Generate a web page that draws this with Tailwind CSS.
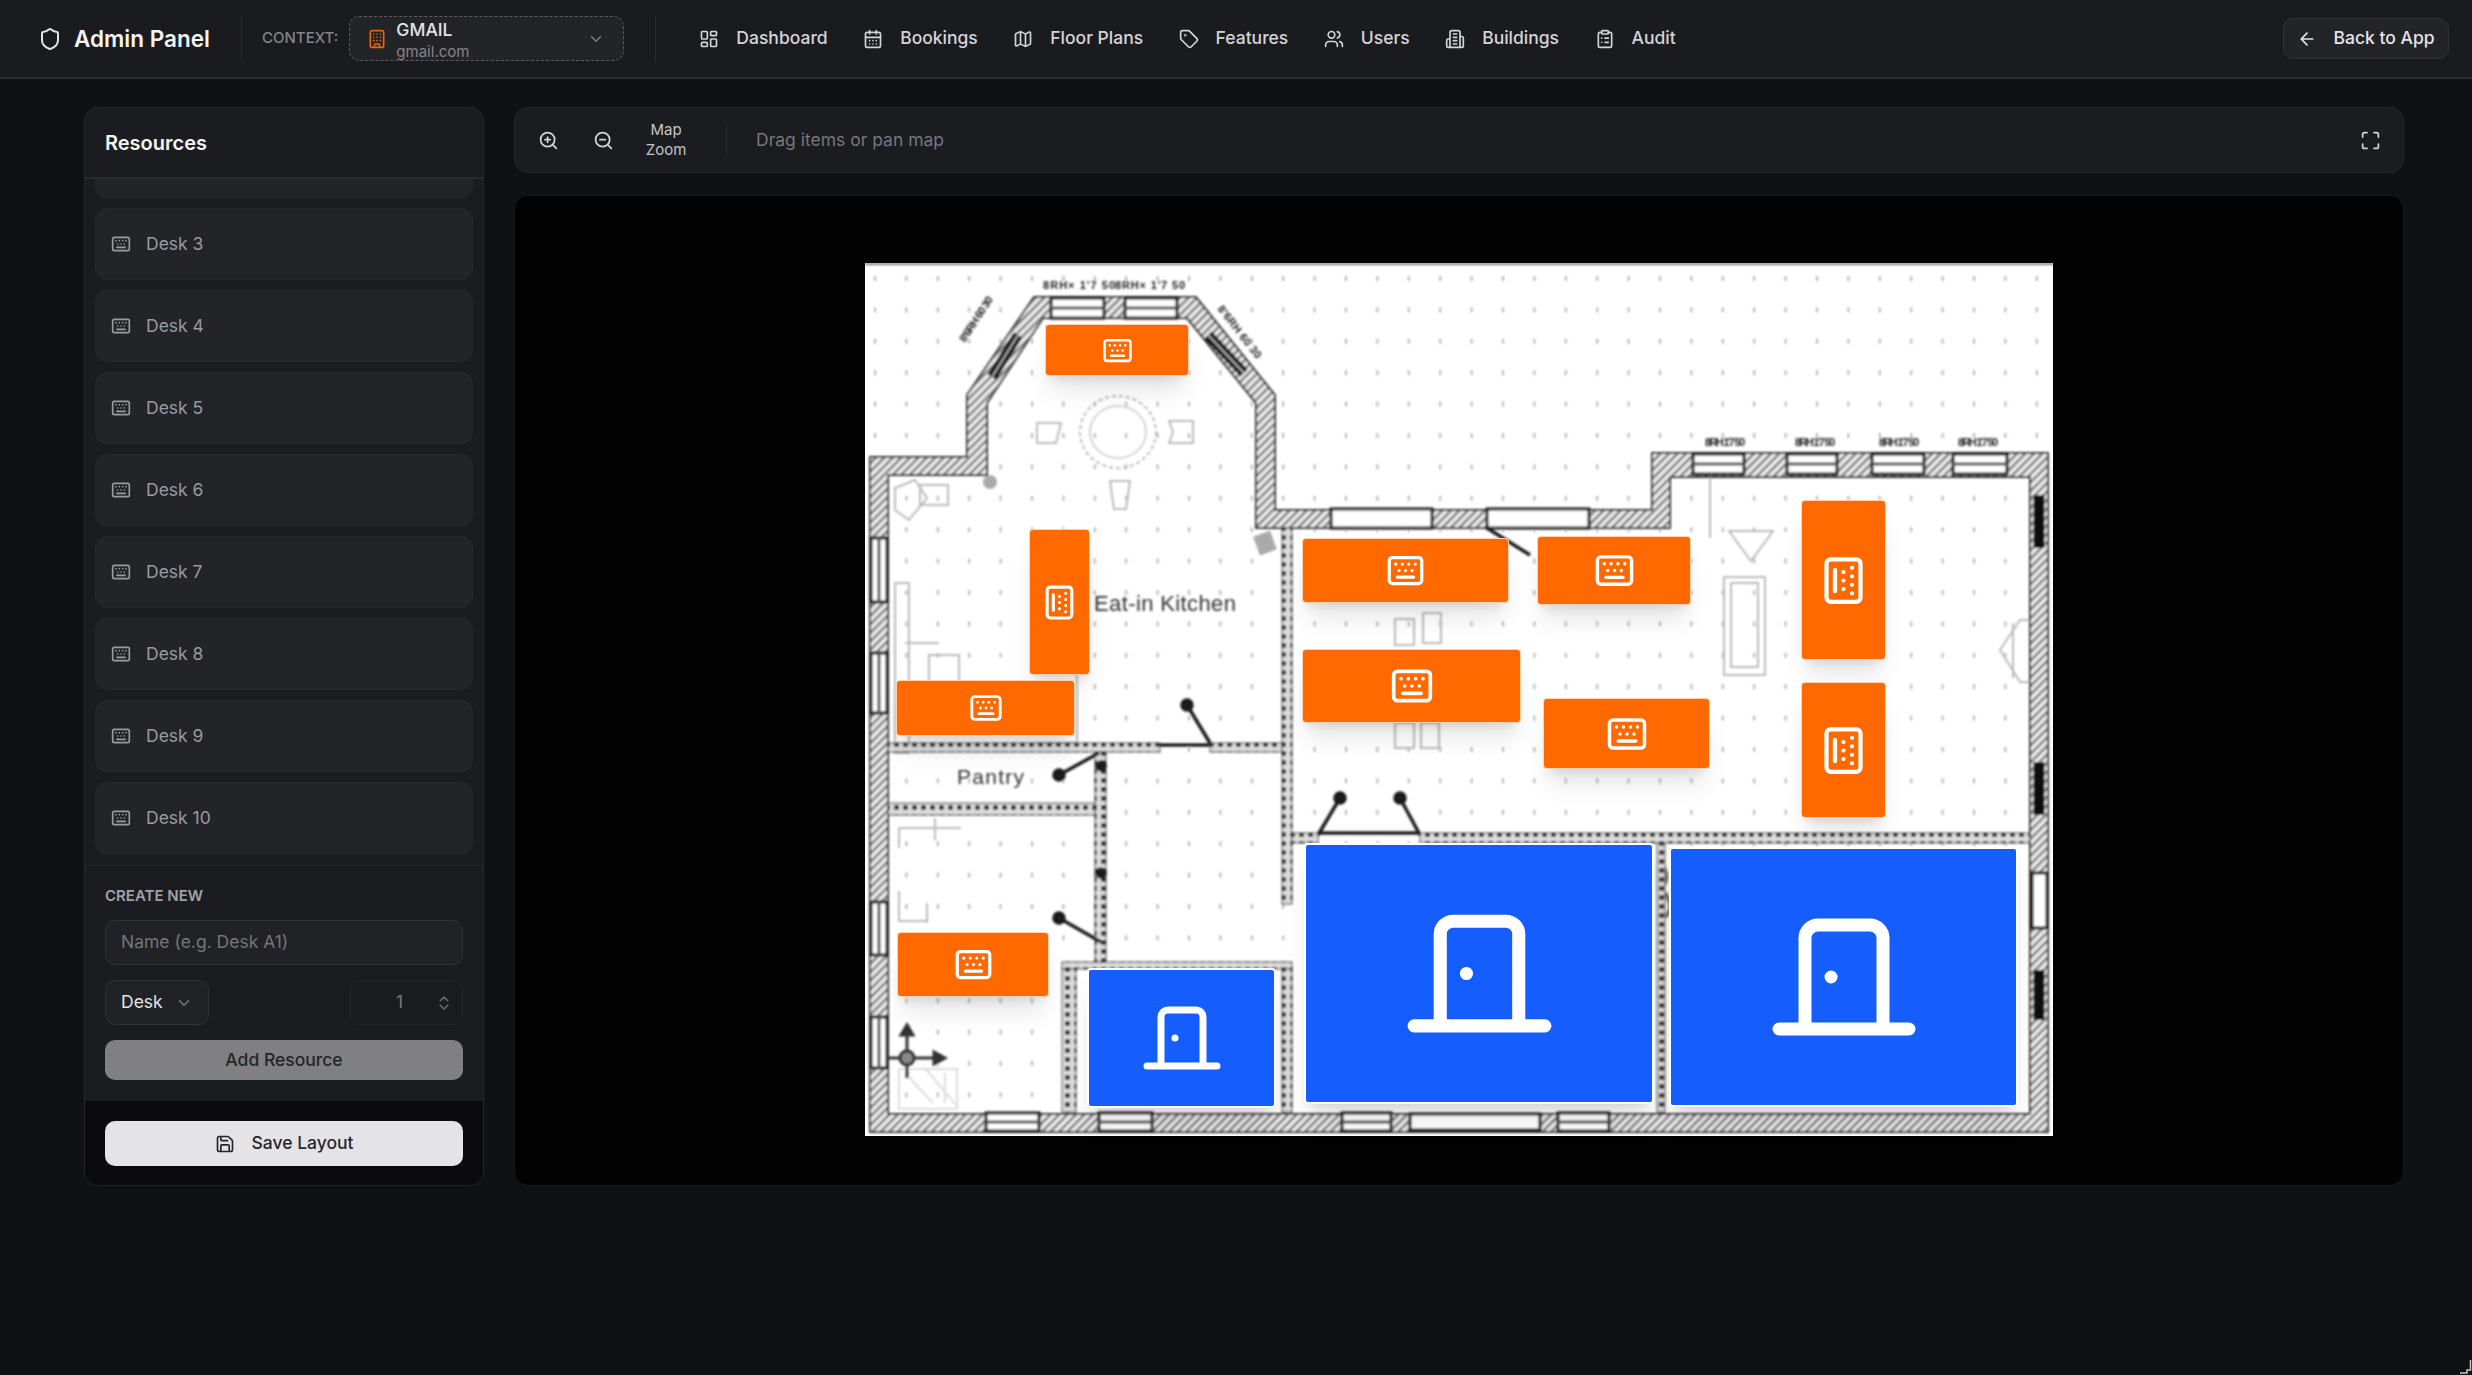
<!DOCTYPE html>
<html lang="en">
<head>
<meta charset="UTF-8">
<title>Admin Panel - Floor Plans</title>
<script src="https://cdn.jsdelivr.net/npm/@tailwindcss/browser@4"></script>
</head>
<body class="h-screen overflow-hidden bg-[#101114] text-[#e4e4e7] font-['Inter',sans-serif] relative">

<!-- icon sprite (lucide shapes) -->
<svg class="hidden">
  <symbol id="i-kbd" viewBox="0 0 24 24"><path d="M10 8h.01M12 12h.01M14 8h.01M16 12h.01M18 8h.01M6 8h.01M7 16h10M8 12h.01"/><rect width="20" height="16" x="2" y="4" rx="2"/></symbol>
  <symbol id="i-kbd-v" viewBox="0 0 24 24"><g transform="rotate(90 12 12)"><path d="M10 8h.01M12 12h.01M14 8h.01M16 12h.01M18 8h.01M6 8h.01M7 16h10M8 12h.01"/><rect width="20" height="16" x="2" y="4" rx="2"/></g></symbol>
  <symbol id="i-door" viewBox="0 0 24 24"><path d="M10 12h.01M18 20V6a2 2 0 0 0-2-2H8a2 2 0 0 0-2 2v14M2 20h20"/></symbol>
  <symbol id="i-chev" viewBox="0 0 24 24"><path d="m6 9 6 6 6-6"/></symbol>
</svg>

<!-- top bar -->
<header class="h-[79px] flex items-center bg-[#1a1b1e] border-b-2 border-[#2a2b2e] pl-[38px] pr-[23px]">
  <div class="flex items-center gap-[12px]">
    <svg class="w-[24px] h-[24px] text-[#e4e4e7]" viewBox="0 0 24 24" fill="none" stroke="currentColor" stroke-width="2" stroke-linecap="round" stroke-linejoin="round"><path d="M20 13c0 5-3.5 7.5-7.66 8.95a1 1 0 0 1-.67-.01C7.5 20.5 4 18 4 13V6a1 1 0 0 1 1-1c2 0 4.5-1.2 6.24-2.72a1.17 1.17 0 0 1 1.52 0C14.51 3.81 17 5 19 5a1 1 0 0 1 1 1z"/></svg>
    <span class="w-[137px] text-[22.5px] font-semibold whitespace-nowrap text-[#f4f4f5]">Admin Panel</span>
  </div>
  <div class="w-px h-[45px] bg-[#2a2b2e] ml-[30px]"></div>
  <span class="ml-[20px] text-[15px] font-medium text-[#85858b]">CONTEXT:</span>
  <div class="ml-[11px] w-[275px] h-[45px] overflow-hidden rounded-[10px] border border-dashed border-[#5a5b60] bg-[#232427] flex items-center pl-[17px] pr-[18px]">
    <svg class="w-[20px] h-[22px] text-[#e8650f] shrink-0" viewBox="0 0 24 24" fill="none" stroke="currentColor" stroke-width="2" stroke-linecap="round" stroke-linejoin="round"><path d="M12 10h.01M12 14h.01M12 6h.01M16 10h.01M16 14h.01M16 6h.01M8 10h.01M8 14h.01M8 6h.01M9 22v-3a1 1 0 0 1 1-1h4a1 1 0 0 1 1 1v3"/><rect x="4" y="2" width="16" height="20" rx="2"/></svg>
    <div class="ml-[9px] flex-1 pt-[3px]">
      <div class="text-[17.5px] font-medium leading-[24px] text-[#e4e4e7]">GMAIL</div>
      <div class="text-[15px] leading-[20px] text-[#85858b]">gmail.com</div>
    </div>
    <svg class="w-[18px] h-[18px] text-[#7a7a80]" fill="none" stroke="currentColor" stroke-width="2" stroke-linecap="round" stroke-linejoin="round"><use href="#i-chev"/></svg>
  </div>
  <div class="w-px h-[45px] bg-[#2a2b2e] ml-[31px]"></div>

  <nav class="ml-[43px] flex items-center gap-[35.5px] text-[17.5px] font-medium text-[#d4d4d8]">
    <a class="flex items-center gap-[17px]"><svg class="w-[20px] h-[20px]" viewBox="0 0 24 24" fill="none" stroke="currentColor" stroke-width="2" stroke-linecap="round" stroke-linejoin="round"><rect width="7" height="9" x="3" y="3" rx="1"/><rect width="7" height="5" x="14" y="3" rx="1"/><rect width="7" height="9" x="14" y="12" rx="1"/><rect width="7" height="5" x="3" y="16" rx="1"/></svg>Dashboard</a>
    <a class="flex items-center gap-[17px]"><svg class="w-[20px] h-[20px]" viewBox="0 0 24 24" fill="none" stroke="currentColor" stroke-width="2" stroke-linecap="round" stroke-linejoin="round"><path d="M8 2v4M16 2v4"/><rect width="18" height="18" x="3" y="4" rx="2"/><path d="M3 10h18M8 14h.01M12 14h.01M16 14h.01M8 18h.01M12 18h.01M16 18h.01"/></svg>Bookings</a>
    <a class="flex items-center gap-[17px]"><svg class="w-[20px] h-[20px]" viewBox="0 0 24 24" fill="none" stroke="currentColor" stroke-width="2" stroke-linecap="round" stroke-linejoin="round"><path d="M14.106 5.553a2 2 0 0 0 1.788 0l3.659-1.83A1 1 0 0 1 21 4.619v12.764a1 1 0 0 1-.553.894l-4.553 2.277a2 2 0 0 1-1.788 0l-4.212-2.106a2 2 0 0 0-1.788 0l-3.659 1.83A1 1 0 0 1 3 19.381V6.618a1 1 0 0 1 .553-.894l4.553-2.277a2 2 0 0 1 1.788 0zM15 5.764v15M9 3.236v15"/></svg>Floor Plans</a>
    <a class="flex items-center gap-[17px]"><svg class="w-[20px] h-[20px]" viewBox="0 0 24 24" fill="none" stroke="currentColor" stroke-width="2" stroke-linecap="round" stroke-linejoin="round"><path d="M12.586 2.586A2 2 0 0 0 11.172 2H4a2 2 0 0 0-2 2v7.172a2 2 0 0 0 .586 1.414l8.704 8.704a2.426 2.426 0 0 0 3.42 0l6.58-6.58a2.426 2.426 0 0 0 0-3.42z"/><circle cx="7.5" cy="7.5" r=".5"/></svg>Features</a>
    <a class="flex items-center gap-[17px]"><svg class="w-[20px] h-[20px]" viewBox="0 0 24 24" fill="none" stroke="currentColor" stroke-width="2" stroke-linecap="round" stroke-linejoin="round"><path d="M16 21v-2a4 4 0 0 0-4-4H6a4 4 0 0 0-4 4v2M16 3.128a4 4 0 0 1 0 7.744M22 21v-2a4 4 0 0 0-3-3.87"/><circle cx="9" cy="7" r="4"/></svg>Users</a>
    <a class="flex items-center gap-[17px]"><svg class="w-[20px] h-[20px]" viewBox="0 0 24 24" fill="none" stroke="currentColor" stroke-width="2" stroke-linecap="round" stroke-linejoin="round"><path d="M6 22V4a2 2 0 0 1 2-2h8a2 2 0 0 1 2 2v18ZM6 12H4a2 2 0 0 0-2 2v6a2 2 0 0 0 2 2h2M18 9h2a2 2 0 0 1 2 2v9a2 2 0 0 1-2 2h-2M10 6h4M10 10h4M10 14h4M10 18h4"/></svg>Buildings</a>
    <a class="flex items-center gap-[17px]"><svg class="w-[20px] h-[20px]" viewBox="0 0 24 24" fill="none" stroke="currentColor" stroke-width="2" stroke-linecap="round" stroke-linejoin="round"><rect width="8" height="4" x="8" y="2" rx="1"/><path d="M16 4h2a2 2 0 0 1 2 2v14a2 2 0 0 1-2 2H6a2 2 0 0 1-2-2V6a2 2 0 0 1 2-2h2M12 11h4M12 16h4M8 11h.01M8 16h.01"/></svg>Audit</a>
  </nav>

  <button class="ml-auto h-[41px] w-[166px] flex items-center justify-center gap-[16px] rounded-[10px] border border-[#303135] bg-[#232427] text-[17.5px] font-medium text-[#e4e4e7]">
    <svg class="w-[20px] h-[20px]" viewBox="0 0 24 24" fill="none" stroke="currentColor" stroke-width="2" stroke-linecap="round" stroke-linejoin="round"><path d="m12 19-7-7 7-7M19 12H5"/></svg>
    Back to App
  </button>
</header>

<main class="flex gap-[30px] pl-[84px] pr-[67px] pt-[28px]">

  <!-- resources sidebar -->
  <aside class="w-[400px] h-[1079px] shrink-0 flex flex-col overflow-hidden rounded-[14px] border border-[#26272a] bg-[#1b1c1f]">
    <div class="h-[71px] shrink-0 flex items-center px-[20px] border-b-2 border-[#2a2b2e] text-[20px] font-semibold text-[#f4f4f5]">Resources</div>
    <div class="h-[686px] shrink-0 overflow-hidden px-[10px]">
      <div class="flex flex-col gap-[10px] mt-[-53px] text-[17.5px] text-[#9a9aa0]">
        <div class="h-[72px] shrink-0 rounded-[12px] border border-[#27282b] bg-[#232427]"></div>
        <div class="h-[72px] shrink-0 flex items-center gap-[15px] pl-[15px] rounded-[12px] border border-[#27282b] bg-[#232427]"><svg class="w-[20px] h-[20px]" fill="none" stroke="currentColor" stroke-width="2" stroke-linecap="round" stroke-linejoin="round"><use href="#i-kbd"/></svg>Desk 3</div>
        <div class="h-[72px] shrink-0 flex items-center gap-[15px] pl-[15px] rounded-[12px] border border-[#27282b] bg-[#232427]"><svg class="w-[20px] h-[20px]" fill="none" stroke="currentColor" stroke-width="2" stroke-linecap="round" stroke-linejoin="round"><use href="#i-kbd"/></svg>Desk 4</div>
        <div class="h-[72px] shrink-0 flex items-center gap-[15px] pl-[15px] rounded-[12px] border border-[#27282b] bg-[#232427]"><svg class="w-[20px] h-[20px]" fill="none" stroke="currentColor" stroke-width="2" stroke-linecap="round" stroke-linejoin="round"><use href="#i-kbd"/></svg>Desk 5</div>
        <div class="h-[72px] shrink-0 flex items-center gap-[15px] pl-[15px] rounded-[12px] border border-[#27282b] bg-[#232427]"><svg class="w-[20px] h-[20px]" fill="none" stroke="currentColor" stroke-width="2" stroke-linecap="round" stroke-linejoin="round"><use href="#i-kbd"/></svg>Desk 6</div>
        <div class="h-[72px] shrink-0 flex items-center gap-[15px] pl-[15px] rounded-[12px] border border-[#27282b] bg-[#232427]"><svg class="w-[20px] h-[20px]" fill="none" stroke="currentColor" stroke-width="2" stroke-linecap="round" stroke-linejoin="round"><use href="#i-kbd"/></svg>Desk 7</div>
        <div class="h-[72px] shrink-0 flex items-center gap-[15px] pl-[15px] rounded-[12px] border border-[#27282b] bg-[#232427]"><svg class="w-[20px] h-[20px]" fill="none" stroke="currentColor" stroke-width="2" stroke-linecap="round" stroke-linejoin="round"><use href="#i-kbd"/></svg>Desk 8</div>
        <div class="h-[72px] shrink-0 flex items-center gap-[15px] pl-[15px] rounded-[12px] border border-[#27282b] bg-[#232427]"><svg class="w-[20px] h-[20px]" fill="none" stroke="currentColor" stroke-width="2" stroke-linecap="round" stroke-linejoin="round"><use href="#i-kbd"/></svg>Desk 9</div>
        <div class="h-[72px] shrink-0 flex items-center gap-[15px] pl-[15px] rounded-[12px] border border-[#27282b] bg-[#232427]"><svg class="w-[20px] h-[20px]" fill="none" stroke="currentColor" stroke-width="2" stroke-linecap="round" stroke-linejoin="round"><use href="#i-kbd"/></svg>Desk 10</div>
      </div>
    </div>

    <div class="h-[236px] shrink-0 border-t border-[#26272a] px-[20px] pt-[20px]">
      <div class="text-[15px] leading-[20px] font-semibold text-[#a1a1a8]">CREATE NEW</div>
      <div class="mt-[14px] h-[45px] flex items-center px-[15px] rounded-[10px] border border-[#303135] bg-[#212225] text-[17.5px] text-[#75757b]">Name (e.g. Desk A1)</div>
      <div class="mt-[15px] flex justify-between">
        <div class="h-[45px] w-[104px] flex items-center justify-between pl-[15px] pr-[15px] rounded-[10px] border border-[#303135] bg-[#212225] text-[17.5px] text-[#e4e4e7]">Desk
          <svg class="w-[18px] h-[18px] text-[#77777d]" fill="none" stroke="currentColor" stroke-width="2" stroke-linecap="round" stroke-linejoin="round"><use href="#i-chev"/></svg>
        </div>
        <div class="h-[45px] w-[113px] flex items-center pl-[45px] pr-[9px] rounded-[10px] border border-[#26272a] bg-[#1b1c1f] text-[17.5px] text-[#77777d]">1
          <svg class="ml-auto w-[18px] h-[18px] text-[#6a6a70]" viewBox="0 0 24 24" fill="none" stroke="currentColor" stroke-width="2" stroke-linecap="round" stroke-linejoin="round"><path d="m7 15 5 5 5-5M7 9l5-5 5 5"/></svg>
        </div>
      </div>
      <button class="mt-[15px] w-full h-[40px] rounded-[10px] bg-[#808082] text-[17.5px] font-medium text-[#242528]">Add Resource</button>
    </div>

    <div class="flex-1 bg-[#0b0b0d] px-[20px] pt-[20px]">
      <button class="w-full h-[45px] flex items-center justify-center gap-[17px] rounded-[10px] bg-[#e4e4e7] text-[17.5px] font-medium text-[#27272a]">
        <svg class="w-[20px] h-[20px]" viewBox="0 0 24 24" fill="none" stroke="currentColor" stroke-width="2" stroke-linecap="round" stroke-linejoin="round"><path d="M15.2 3a2 2 0 0 1 1.4.6l3.8 3.8a2 2 0 0 1 .6 1.4V19a2 2 0 0 1-2 2H5a2 2 0 0 1-2-2V5a2 2 0 0 1 2-2zM17 21v-7a1 1 0 0 0-1-1H8a1 1 0 0 0-1 1v7M7 3v4a1 1 0 0 0 1 1h7"/></svg>
        Save Layout
      </button>
    </div>
  </aside>

  <section class="w-[1890px] flex flex-col gap-[22px]">
    <!-- map toolbar -->
    <div class="h-[66px] flex items-center rounded-[14px] border border-[#26272a] bg-[#1b1c1f] pl-[23px] pr-[22px]">
      <svg class="w-[21px] h-[21px] text-[#d4d4d8]" viewBox="0 0 24 24" fill="none" stroke="currentColor" stroke-width="2" stroke-linecap="round" stroke-linejoin="round"><circle cx="11" cy="11" r="8"/><path d="m21 21-4.3-4.3M11 8v6M8 11h6"/></svg>
      <svg class="ml-[34px] w-[21px] h-[21px] text-[#d4d4d8]" viewBox="0 0 24 24" fill="none" stroke="currentColor" stroke-width="2" stroke-linecap="round" stroke-linejoin="round"><circle cx="11" cy="11" r="8"/><path d="m21 21-4.3-4.3M8 11h6"/></svg>
      <div class="ml-[27px] w-[50px] text-center text-[15px] leading-[20px] text-[#c4c4c8]">Map Zoom</div>
      <div class="ml-[35px] w-px h-[32px] bg-[#2a2b2e]"></div>
      <span class="ml-[29px] text-[17.5px] text-[#77777d]">Drag items or pan map</span>
      <svg class="ml-auto w-[21px] h-[21px] text-[#d4d4d8]" viewBox="0 0 24 24" fill="none" stroke="currentColor" stroke-width="2" stroke-linecap="round" stroke-linejoin="round"><path d="M8 3H5a2 2 0 0 0-2 2v3M21 8V5a2 2 0 0 0-2-2h-3M3 16v3a2 2 0 0 0 2 2h3M16 21h3a2 2 0 0 0 2-2v-3"/></svg>
    </div>

    <!-- map canvas -->
    <div class="h-[991px] rounded-[14px] bg-[#020202] border border-[#17181a] flex justify-center pt-[67px]">
      <div class="relative w-[1188px] h-[873px] bg-white">
        <svg class="absolute inset-0 w-full h-full" viewBox="0 0 1188 873">
          <defs>
            <pattern id="hatch" width="6" height="6" patternUnits="userSpaceOnUse" patternTransform="rotate(45)"><rect width="6" height="6" fill="#f2f2f2"/><rect width="2.6" height="6" fill="#7a7a7a"/></pattern>
            <pattern id="dash" width="9" height="9" patternUnits="userSpaceOnUse"><rect width="9" height="9" fill="#ddd"/><rect width="5" height="5" x="2" y="2" fill="#333"/></pattern>
            <pattern id="grid" x="8" y="13" width="31.4" height="31.4" patternUnits="userSpaceOnUse"><rect x="1" y="0" width="2" height="5" fill="#b5b5b5"/></pattern>
            <filter id="soft"><feGaussianBlur stdDeviation="1.1"/></filter>
          </defs>
          <g filter="url(#soft)">
            <rect width="1188" height="873" fill="url(#grid)"/>
            <rect width="1188" height="2" fill="#777"/>

            <!-- furniture -->
            <g fill="none" stroke="#bbb" stroke-width="2">
              <ellipse cx="253" cy="169" rx="38" ry="36" stroke-dasharray="4 3"/>
              <ellipse cx="253" cy="169" rx="28" ry="26" stroke="#d4d4d4"/>
              <path d="M172 160h24l-5 20h-19zM304 158h24v22h-24l4-11zM245 218h20l-4 28h-12z"/>
              <path d="M30 225l20-8 12 18-18 22-14-10zM55 222h28v20H55z"/>
              <path d="M30 320h14v170H30zM40 380h34M64 392h30v30H64zM170 410h42v70h-42"/>
              <path d="M859 314h41v98h-41zM866 320h27v84h-27z"/>
              <path d="M864 268h44l-22 30zM845 215v60"/>
              <path d="M1135 387l20-30h15v62h-15zM1148 360v55"/>
              <path d="M530 356h19v26h-19zM558 350h18v30h-18zM530 460h19v25h-19zM556 460h18v25h-18z"/>
              <path d="M500 395c20-8 60-8 80 0M1000 650h88v34M1000 650v14"/>
              <path d="M34 565h62M34 565v20M70 555v22M34 628v30h28M62 640v20"/>
              <path d="M40 810l28 30M60 805l30 36M80 810v30M34 806h58v40H34z" stroke="#ddd"/>
            </g>
            <rect x="391" y="270" width="18" height="20" fill="#aaa" transform="rotate(-20 400 280)"/>
            <circle cx="125" cy="219" r="7" fill="#aaa"/>
            <path d="M795 600c6 6 10 16 2 24M800 630c6 8 8 18 0 24" fill="none" stroke="#777" stroke-width="4"/>

            <!-- walls -->
            <path fill="url(#hatch)" fill-rule="evenodd" stroke="#333" stroke-width="2" d="M169 34H331L410 132V247H787V190H1183V869H5V194H102V132ZM178 55 122 140V212H23V851H1165V214H805V265H391V140L322 55Z"/>
            <g fill="url(#dash)" stroke="#444">
              <rect x="23" y="480" width="272" height="9"/>
              <rect x="345" y="480" width="72" height="9"/>
              <rect x="417" y="265" width="10" height="376"/>
              <rect x="230" y="489" width="11" height="210"/>
              <rect x="23" y="540" width="207" height="12"/>
              <rect x="427" y="570" width="26" height="10"/>
              <rect x="555" y="570" width="610" height="10"/>
              <rect x="197" y="699" width="230" height="7"/>
              <rect x="197" y="706" width="14" height="143"/>
              <rect x="417" y="706" width="10" height="143"/>
              <rect x="792" y="580" width="8" height="269"/>
            </g>
            <!-- windows -->
            <g fill="#fff" stroke="#1b1b1b" stroke-width="3">
              <rect x="186" y="35" width="53" height="20"/><rect x="260" y="35" width="52" height="20"/>
              <rect x="828" y="191" width="51" height="20"/><rect x="922" y="191" width="50" height="20"/><rect x="1007" y="191" width="52" height="20"/><rect x="1088" y="191" width="54" height="20"/>
              <rect x="121" y="850" width="53" height="18"/><rect x="234" y="850" width="53" height="18"/><rect x="477" y="850" width="49" height="18"/><rect x="693" y="850" width="51" height="18"/>
              <rect x="466" y="246" width="101" height="19"/><rect x="622" y="246" width="102" height="19"/><rect x="545" y="851" width="130" height="16"/>
              <rect x="6" y="275" width="16" height="64"/><rect x="6" y="390" width="16" height="60"/><rect x="6" y="639" width="16" height="53"/><rect x="6" y="754" width="16" height="51"/>
              <rect x="1167" y="610" width="15" height="55"/>
            </g>
            <g stroke="#555" stroke-width="3">
              <path d="M186 45h53M260 45h52M828 201h51M922 201h50M1007 201h52M1088 201h54M121 859h53M234 859h53M477 859h49M693 859h51"/>
              <path d="M14 275v64M14 390v60M14 639v53M14 754v51"/>
            </g>
            <path d="M1174 232v53M1174 499v53M1174 707v50" stroke="#111" stroke-width="11"/>
            <path d="M153 72 127 114M343 72 379 110" stroke="#111" stroke-width="10"/>
            <path d="M153 72 127 114M343 72 379 110" stroke="#aaa" stroke-width="2"/>
            <!-- door swings -->
            <g stroke="#1a1a1a" stroke-width="3.5" fill="#1a1a1a">
              <path d="M322 442 345 480M295 482H345M194 512 234 490M194 655 236 679M475 535 453 572M535 535 555 572M453 570H555M622 265 665 292"/>
              <circle cx="322" cy="442" r="5"/><circle cx="194" cy="512" r="5"/><circle cx="194" cy="655" r="5"/><circle cx="475" cy="535" r="5"/><circle cx="535" cy="535" r="5"/>
              <circle cx="236" cy="503" r="4"/><circle cx="236" cy="610" r="4"/>
            </g>
            <!-- compass -->
            <g stroke="#333" stroke-width="3" fill="#333">
              <path d="M42 770V815M22 795H70"/><path d="M42 762l-6 10h12zM80 795l-11-6v12z"/><circle cx="42" cy="795" r="7" fill="#888"/>
            </g>
            <!-- labels -->
            <g font-family="'Liberation Sans',sans-serif" fill="#2e2e2e">
              <text x="229" y="348" font-size="22" textLength="142">Eat-in Kitchen</text>
              <text x="92" y="521" font-size="21" textLength="67">Pantry</text>
              <g font-size="11" font-weight="700" fill="#222">
                <text x="178" y="26" textLength="72">8RH× 1'7 50</text><text x="250" y="26" textLength="70">8RH× 1'7 50</text>
                <text x="840" y="183" textLength="40">8RH 1'7 50</text><text x="930" y="183" textLength="40">8RH 1'7 50</text><text x="1014" y="183" textLength="40">8RH 1'7 50</text><text x="1093" y="183" textLength="40">8RH 1'7 50</text>
                <text transform="translate(100 80) rotate(-57)" textLength="52">8'6RH 60 30</text>
                <text transform="translate(352 46) rotate(52)" textLength="64">8'6RH 60 30</text>
              </g>
            </g>
          </g>
        </svg>

        <!-- placed resources -->
        <div class="absolute left-[180px] top-[61px] w-[144px] h-[52px] flex items-center justify-center bg-orange-500 rounded-[4px] border border-white/70 shadow-xl text-white"><svg class="w-[31px] h-[31px]" fill="none" stroke="currentColor" stroke-width="2" stroke-linecap="round" stroke-linejoin="round"><use href="#i-kbd"/></svg></div>
        <div class="absolute left-[164px] top-[266px] w-[61px] h-[146px] flex items-center justify-center bg-orange-500 rounded-[4px] border border-white/70 shadow-xl text-white"><svg class="w-[37px] h-[37px]" fill="none" stroke="currentColor" stroke-width="2" stroke-linecap="round" stroke-linejoin="round"><use href="#i-kbd-v"/></svg></div>
        <div class="absolute left-[31px] top-[417px] w-[179px] h-[56px] flex items-center justify-center bg-orange-500 rounded-[4px] border border-white/70 shadow-xl text-white"><svg class="w-[34px] h-[34px]" fill="none" stroke="currentColor" stroke-width="2" stroke-linecap="round" stroke-linejoin="round"><use href="#i-kbd"/></svg></div>
        <div class="absolute left-[437px] top-[275px] w-[207px] h-[65px] flex items-center justify-center bg-orange-500 rounded-[4px] border border-white/70 shadow-xl text-white"><svg class="w-[39px] h-[39px]" fill="none" stroke="currentColor" stroke-width="2" stroke-linecap="round" stroke-linejoin="round"><use href="#i-kbd"/></svg></div>
        <div class="absolute left-[672px] top-[273px] w-[154px] h-[69px] flex items-center justify-center bg-orange-500 rounded-[4px] border border-white/70 shadow-xl text-white"><svg class="w-[41px] h-[41px]" fill="none" stroke="currentColor" stroke-width="2" stroke-linecap="round" stroke-linejoin="round"><use href="#i-kbd"/></svg></div>
        <div class="absolute left-[437px] top-[386px] w-[219px] h-[74px] flex items-center justify-center bg-orange-500 rounded-[4px] border border-white/70 shadow-xl text-white"><svg class="w-[44px] h-[44px]" fill="none" stroke="currentColor" stroke-width="2" stroke-linecap="round" stroke-linejoin="round"><use href="#i-kbd"/></svg></div>
        <div class="absolute left-[678px] top-[435px] w-[167px] h-[71px] flex items-center justify-center bg-orange-500 rounded-[4px] border border-white/70 shadow-xl text-white"><svg class="w-[42px] h-[42px]" fill="none" stroke="currentColor" stroke-width="2" stroke-linecap="round" stroke-linejoin="round"><use href="#i-kbd"/></svg></div>
        <div class="absolute left-[936px] top-[237px] w-[85px] h-[160px] flex items-center justify-center bg-orange-500 rounded-[4px] border border-white/70 shadow-xl text-white"><svg class="w-[51px] h-[51px]" fill="none" stroke="currentColor" stroke-width="2" stroke-linecap="round" stroke-linejoin="round"><use href="#i-kbd-v"/></svg></div>
        <div class="absolute left-[936px] top-[419px] w-[85px] h-[136px] flex items-center justify-center bg-orange-500 rounded-[4px] border border-white/70 shadow-xl text-white"><svg class="w-[51px] h-[51px]" fill="none" stroke="currentColor" stroke-width="2" stroke-linecap="round" stroke-linejoin="round"><use href="#i-kbd-v"/></svg></div>
        <div class="absolute left-[32px] top-[669px] w-[152px] h-[65px] flex items-center justify-center bg-orange-500 rounded-[4px] border border-white/70 shadow-xl text-white"><svg class="w-[39px] h-[39px]" fill="none" stroke="currentColor" stroke-width="2" stroke-linecap="round" stroke-linejoin="round"><use href="#i-kbd"/></svg></div>
        <div class="absolute left-[222px] top-[705px] w-[189px] h-[140px] flex items-center justify-center bg-blue-600 rounded-[4px] border-2 border-white shadow-xl text-white"><svg class="w-[84px] h-[84px]" fill="none" stroke="currentColor" stroke-width="2" stroke-linecap="round" stroke-linejoin="round"><use href="#i-door"/></svg></div>
        <div class="absolute left-[439px] top-[580px] w-[350px] h-[261px] flex items-center justify-center bg-blue-600 rounded-[4px] border-2 border-white shadow-xl text-white"><svg class="w-[157px] h-[157px]" fill="none" stroke="currentColor" stroke-width="2" stroke-linecap="round" stroke-linejoin="round"><use href="#i-door"/></svg></div>
        <div class="absolute left-[804px] top-[584px] w-[349px] h-[260px] flex items-center justify-center bg-blue-600 rounded-[4px] border-2 border-white shadow-xl text-white"><svg class="w-[156px] h-[156px]" fill="none" stroke="currentColor" stroke-width="2" stroke-linecap="round" stroke-linejoin="round"><use href="#i-door"/></svg></div>
      </div>
    </div>
  </section>
</main>

<!-- resize grip corner -->
<svg class="absolute right-0 bottom-0 w-[14px] h-[15px] text-[#c8c8c8]" viewBox="0 0 14 15" fill="none" stroke="currentColor" stroke-width="1.5"><path d="M2 13H9V10H12.5V0"/></svg>
</body>
</html>
